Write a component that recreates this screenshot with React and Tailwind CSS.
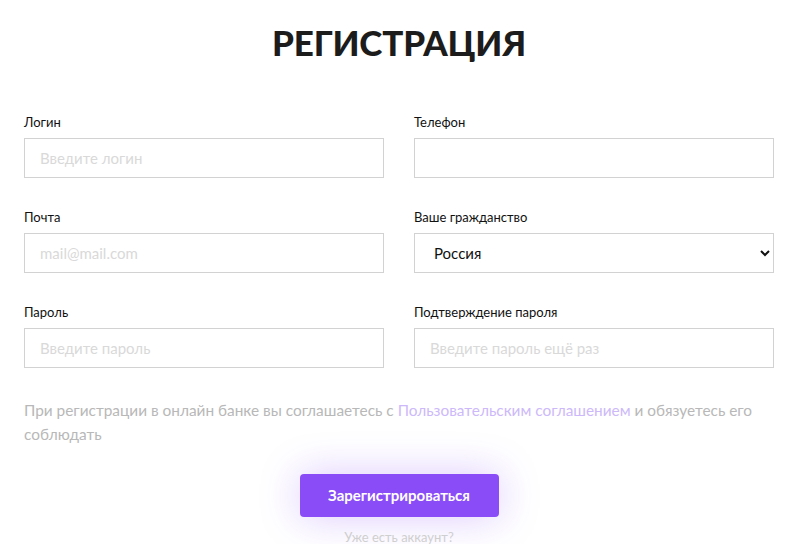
export default function App() {
  const font = { fontFamily: "Lato, 'Noto Sans', sans-serif" };
  const Field = ({ label, children }) => (
    <div className="flex flex-col">
      <label className="text-[13px] leading-[20px] text-[#111] mb-[6px]">{label}</label>
      {children}
    </div>
  );
  const inputCls =
    "h-[40px] w-full border border-[#d2d2d2] px-[15px] text-[15px] text-[#111] outline-none placeholder:text-[#d9d9d9]";
  return (
    <div className="min-h-[544px] w-[805px] bg-white overflow-hidden" style={font}>
      <div className="ml-[24px] w-[750px]">
        <h1 className="text-center text-[35px] leading-[40px] font-black tracking-[-0.2px] text-[#1c1c1c] pt-[22px]">
          РЕГИСТРАЦИЯ
        </h1>
        <div className="grid grid-cols-2 gap-x-[30px] gap-y-[29px] mt-[50px]">
          <Field label="Логин">
            <input className={inputCls} placeholder="Введите логин" />
          </Field>
          <Field label="Телефон">
            <input className={inputCls} />
          </Field>
          <Field label="Почта">
            <input className={inputCls} placeholder="mail@mail.com" />
          </Field>
          <Field label="Ваше гражданство">
            <select className="h-[40px] w-full border border-[#d2d2d2] pl-[15px] pr-[4px] text-[15px] text-[#111] outline-none">
              <option>Россия</option>
            </select>
          </Field>
          <Field label="Пароль">
            <input className={inputCls} placeholder="Введите пароль" />
          </Field>
          <Field label="Подтверждение пароля">
            <input className={inputCls} placeholder="Введите пароль ещё раз" />
          </Field>
        </div>
        <p className="mt-[30px] text-[15.4px] leading-[24px] text-[#b8b8b8]">
          При регистрации в онлайн банке вы соглашаетесь с{" "}
          <a className="text-[#cdb9fa]">Пользовательским соглашением</a> и обязуетесь его
          соблюдать
        </p>
        <div className="flex flex-col items-center mt-[28px]">
          <button className="h-[43px] w-[199px] rounded-[4px] bg-[#8a4cf7] text-white text-[15px] font-bold shadow-[0_0_40px_rgba(139,76,247,0.3)]">
            Зарегистрироваться
          </button>
          <span className="mt-[10px] text-[13px] leading-[20px] text-[#cfcfcf]">Уже есть аккаунт?</span>
        </div>
      </div>
    </div>
  );
}
